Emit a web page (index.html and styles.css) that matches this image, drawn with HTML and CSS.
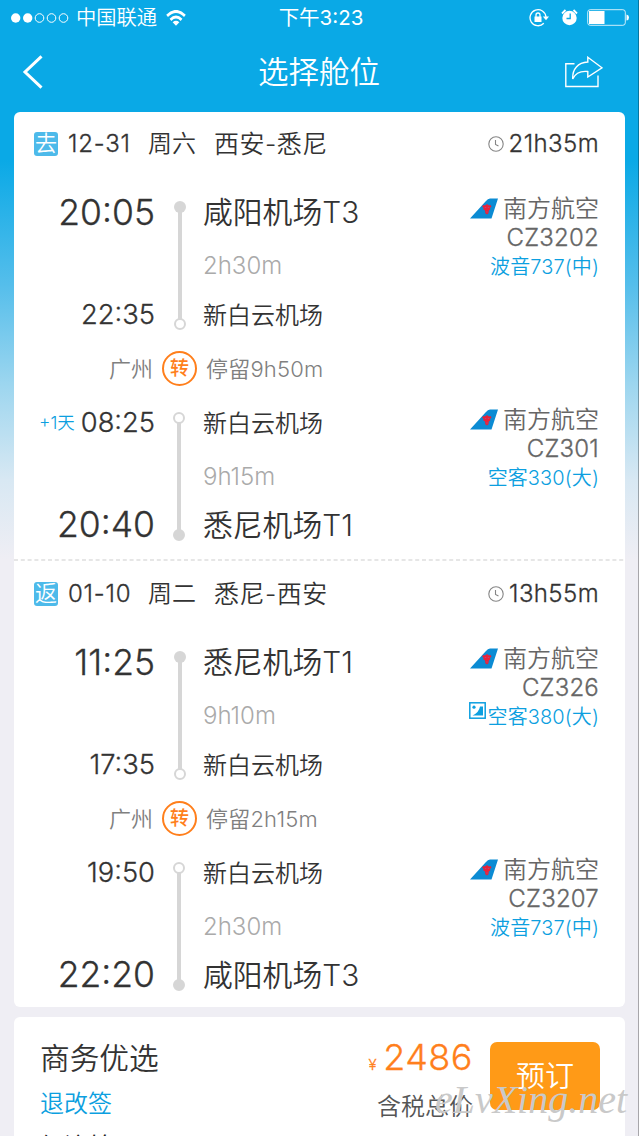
FILE: index.html
```html
<!DOCTYPE html>
<html lang="zh-CN">
<head>
<meta charset="utf-8">
<title>选择舱位</title>
<link rel="stylesheet" href="styles.css">
</head>
<body>
<svg width="0" height="0" class="defs">
  <symbol id="tail" viewBox="0 0 28 21">
    <path d="M0 20.500 15.500 3.500Q18 .7 20 .5H28L21.500 20.500Z" fill="#0b8bd3"/>
    <path d="M12 8.300 13.500 7 15 7.500 17 6 19 7.500 20.500 7 21.500 8.500 20 10 20.300 11.500 18.800 12.500 18.500 15.300 17 16.500 15.300 15.300 15 12.500 13.300 11.500 13.600 10Z" fill="#ea2138"/>
    <path d="M14.800 9.500h1.500M17.800 9.500H19.300M16.200 14h1.500" stroke="#a8508c" stroke-width=".8"/>
  </symbol>
  <symbol id="clock" viewBox="0 0 16 16">
    <g fill="none" stroke="#858585" stroke-width="1.100"><circle cx="8" cy="8" r="7.200"/><path d="M7.500 4v4.500L10.500 10"/></g>
  </symbol>
</svg>
<div class="screen">
  <div class="status">
    <div class="carrier">
      <svg width="58" height="12" viewBox="0 0 58 12"><g fill="#fff"><circle cx="4.700" cy="6" r="4.700"/><circle cx="16.700" cy="6" r="4.700"/></g><g fill="none" stroke="#fff"><circle cx="28.500" cy="6" r="4.300"/><circle cx="40.500" cy="6" r="4.300"/><circle cx="52.500" cy="6" r="4.300"/></g></svg>
      <span class="carrier-name">中国联通</span>
      <svg class="wifi" width="20" height="16" viewBox="0 0 22 16" preserveAspectRatio="none"><g fill="none" stroke="#fff" stroke-width="2.900"><path d="M1.200 5.800Q11-3 20.800 5.800"/><path d="M4.900 9.800Q11 4.300 17.100 9.800"/></g><path d="M7.300 12.200Q11 9.300 14.700 12.200L11 15.800Z" fill="#fff"/></svg>
    </div>
    <div class="clock-time">下午3:23</div>
    <div class="indicators">
      <svg width="20" height="18" viewBox="0 0 20 18"><path d="M14.800 14.300A8 8 0 1 1 17 8" fill="none" stroke="#fff" stroke-width="1.300"/><path d="M13.800 7.500H20L17 11.300Z" fill="#fff"/><rect x="5.500" y="7.500" width="7" height="5.500" fill="#fff"/><path d="M7 8V6a2 2 0 0 1 4 0v2" fill="none" stroke="#fff" stroke-width="1.300"/></svg>
      <svg class="alarm" width="17" height="17" viewBox="0 0 17 17"><circle cx="8.500" cy="9" r="7.200" fill="#fff"/><path d="M1 4.500 4.500 1M16 4.500 12.500 1" stroke="#fff" stroke-width="1.800"/><path d="M9.200 4.500V9.500H5.500" fill="none" stroke="#0aa9e6" stroke-width="1.300"/></svg>
      <svg class="battery" width="42" height="17" viewBox="0 0 42 17"><rect x=".7" y=".7" width="37.600" height="15.600" rx="2.500" fill="none" stroke="#fff" stroke-opacity=".8"/><rect x="2" y="2" width="15.500" height="13" fill="#fff"/><path d="M39.500 5.500Q42 6 42 8.500T39.500 11.500Z" fill="#fff"/></svg>
    </div>
  </div>
  <div class="nav">
    <svg width="22" height="34" viewBox="0 0 22 34"><path d="M19.500 1.300 3 17 19.500 32.700" fill="none" stroke="#fff" stroke-width="3"/></svg>
    <h1>选择舱位</h1>
    <svg class="share" width="38" height="32" viewBox="0 0 38 32"><g fill="none" stroke="#fff" stroke-width="1.400"><path d="M9.500 7.700H.8V30.500H33V19.500"/><path d="M22.800 1.200 37 11.800 22.800 21V15.500C14 14.500 10 18 7.700 23 7.200 13 13 6.500 22.800 6Z"/></g></svg>
  </div>

  <section class="card">
    <article class="journey">
      <header class="head"><span class="tag">去</span><span class="date">12-31</span><span class="week">周六</span><span class="route">西安-悉尼</span><span class="total"><svg width="16" height="16"><use href="#clock"/></svg>21h35m</span></header>
      <div class="leg">
        <div class="time big">20:05</div><div class="place big">咸阳机场T3</div>
        <div class="duration">2h30m</div>
        <div class="time stop">22:35</div><div class="place stop">新白云机场</div>
        <div class="rail"></div>
        <div class="flight"><div class="airline"><svg width="28" height="21"><use href="#tail"/></svg>南方航空</div><div class="no">CZ3202</div><div class="plane">波音737(中)</div></div>
      </div>
      <div class="transfer"><span class="city">广州</span><span class="turn">转</span><span class="stay">停留9h50m</span></div>
      <div class="leg arriving">
        <div class="time stop"><small>+1天</small>08:25</div><div class="place stop">新白云机场</div>
        <div class="duration">9h15m</div>
        <div class="time big">20:40</div><div class="place big">悉尼机场T1</div>
        <div class="rail"></div>
        <div class="flight"><div class="airline"><svg width="28" height="21"><use href="#tail"/></svg>南方航空</div><div class="no">CZ301</div><div class="plane">空客330(大)</div></div>
      </div>
    </article>
    <svg class="divider" width="611" height="2"><path d="M0 1H611" stroke="#dedede" stroke-width="1.500" stroke-dasharray="4 2.800"/></svg>
    <article class="journey return">
      <header class="head"><span class="tag">返</span><span class="date">01-10</span><span class="week">周二</span><span class="route">悉尼-西安</span><span class="total"><svg width="16" height="16"><use href="#clock"/></svg>13h55m</span></header>
      <div class="leg">
        <div class="time big">11:25</div><div class="place big">悉尼机场T1</div>
        <div class="duration">9h10m</div>
        <div class="time stop">17:35</div><div class="place stop">新白云机场</div>
        <div class="rail"></div>
        <div class="flight"><div class="airline"><svg width="28" height="21"><use href="#tail"/></svg>南方航空</div><div class="no">CZ326</div><div class="plane"><svg class="photo" width="17" height="17" viewBox="0 0 17 17"><rect x=".8" y=".8" width="15.400" height="15.400" fill="none" stroke="#0c9fe0" stroke-width="1.500"/><path d="M3.500 13.500Q10 10.500 11 4.500H14V13.500Z" fill="#0c9fe0"/><circle cx="5" cy="5.200" r="1.600" fill="#0c9fe0"/></svg>空客380(大)</div></div>
      </div>
      <div class="transfer"><span class="city">广州</span><span class="turn">转</span><span class="stay">停留2h15m</span></div>
      <div class="leg arriving">
        <div class="time stop">19:50</div><div class="place stop">新白云机场</div>
        <div class="duration">2h30m</div>
        <div class="time big">22:20</div><div class="place big">咸阳机场T3</div>
        <div class="rail"></div>
        <div class="flight"><div class="airline"><svg width="28" height="21"><use href="#tail"/></svg>南方航空</div><div class="no">CZ3207</div><div class="plane">波音737(中)</div></div>
      </div>
    </article>
  </section>

  <section class="card fare">
    <div class="cabin"><h2>商务优选</h2><a>退改签</a><p>经济舱</p></div>
    <div class="price"><div class="amount"><i>¥</i>2486</div><div class="tax">含税总价</div></div>
    <div class="book">预订</div>
  </section>
  <svg class="watermark" width="200" height="56"><text x="2" y="36" textLength="192" lengthAdjust="spacingAndGlyphs">eLvXing.net</text></svg>
</div>
</body>
</html>
```

FILE: styles.css
```css
*, *::before, *::after { box-sizing: border-box; margin: 0; padding: 0; }
body { font-family: Inter, "Noto Sans CJK SC", sans-serif; font-weight: 350; color: #333; }
.defs { position: absolute; }
svg { flex: none; display: block; }
.screen { position: relative; width: 639px; height: 1136px; overflow: hidden; border-right: 1px solid rgba(0,0,0,.3); background: linear-gradient(#0aa9e6 0, #0aa9e6 160px, #55beeb 285px, #9dd6ef 385px, #d8e8f3 480px, #efeef4 560px); }

.status { display: grid; grid-template-columns: 1fr auto 1fr; align-items: center; height: 35px; padding: 0 9px 0 11px; color: #fff; line-height: 35px; }
.carrier, .indicators { display: flex; align-items: center; }
.carrier-name { margin: 0 9px 0 7px; font-size: 20.3px; }
.clock-time { padding-left: 2px; font-size: 20.500px; font-weight: 400; }
.indicators { justify-content: flex-end; }
.alarm { margin: 0 9px 0 12px; }
.nav { display: grid; grid-template-columns: 1fr auto 1fr; align-items: center; height: 77px; padding: 0 35px 3px 22px; color: #fff; }
.nav h1 { font-size: 30.500px; font-weight: 350; line-height: 40px; padding-left: 13px; }
.share { justify-self: end; }

.card { width: 611px; margin: 0 0 10px 14px; background: #fff; border-radius: 6px; overflow: hidden; }
.journey { height: 446px; }
.journey.return { height: 445px; }
.divider { margin: 1px 0; }
.head { display: flex; align-items: center; height: 64px; padding: 0 26px 0 20px; margin-bottom: 14px; font-size: 24.500px; line-height: 64px; }
.tag { width: 24px; height: 24px; margin-top: -1px; border-radius: 3px; background: #4dbaea; color: #fff; font-size: 22px; line-height: 22px; text-align: center; }
.date { width: 80px; padding-left: 10px; font-size: 24px; letter-spacing: .8px; }
.week { width: 66px; padding-left: 10px; font-size: 24px; }
.route { padding-left: 10px; font-size: 25px; letter-spacing: .5px; }
.total { display: flex; align-items: center; gap: 5px; margin-left: auto; font-size: 24px; letter-spacing: .4px; }
.date, .total, .time, .no { -webkit-text-stroke: .3px currentColor; }

.leg { display: grid; grid-template: 44px 62px 38px / 141px 48px 222px 1fr; height: 146px; padding-right: 26px; }
.leg.arriving { grid-template-rows: 45px 63px 36px; }
.leg > * { display: flex; align-items: center; }
.time { grid-column: 1; justify-content: flex-end; font-size: 27.3px; }
.time.big { font-size: 35.500px; }
.leg .time.stop { padding-bottom: 1px; }
.arriving .time.big { padding-bottom: 3px; }
.time small { margin-right: 6px; padding-bottom: 2px; color: #0c9fe0; font-size: 17.500px; -webkit-text-stroke: 0; }
.place { grid-column: 3; padding-bottom: 4px; font-size: 24px; }
.arriving .place.stop { padding-bottom: 2px; }
.place.big { padding-bottom: 5px; font-size: 29.800px; }
.arriving .place.big { padding-bottom: 6px; }
.duration { grid-column: 3; font-size: 24px; color: #aaa; }
.leg > .rail { grid-column: 2; grid-row: 1 / 4; align-self: start; justify-self: center; flex-direction: column; justify-content: space-between; width: 12px; height: 129px; margin: 11px 0 0 1px; background: linear-gradient(90deg, transparent 4px, #d6d6d6 4px, #d6d6d6 8px, transparent 8px) 0 10px / 12px 109px no-repeat; }
.rail::before, .rail::after { content: ""; flex: none; width: 12px; height: 12px; border-radius: 50%; background: #d6d6d6; }
.rail::after, .arriving .rail::before { background: #fff; border: 2.500px solid #d6d6d6; }
.arriving .rail::after { background: #d6d6d6; }
.arriving > .rail { margin: 12px 1px 0 0; }
.leg > .flight { grid-column: 4; grid-row: 1 / 4; align-self: start; flex-direction: column; align-items: flex-end; margin-top: 4px; line-height: 29px; color: #666; font-size: 24px; }
.arriving > .flight { margin-top: 5px; }
.airline, .plane { display: flex; align-items: center; white-space: nowrap; }
.airline svg { margin-right: 5px; }
.no { letter-spacing: .2px; }
.plane { padding-top: 1px; color: #0c9fe0; font-size: 20px; letter-spacing: .1px; }
.photo { margin: -14px 2px 0 0; }

.transfer { display: flex; align-items: center; height: 64px; color: #808080; font-size: 22px; }
.city, .stay { padding-bottom: 2px; }
.stay { letter-spacing: .2px; }
.city { width: 139px; text-align: right; }
.turn { width: 35px; height: 35px; margin: 0 9px; border: 2px solid #ff7f1c; border-radius: 50%; color: #ff7f1c; font-size: 19px; font-weight: 500; line-height: 32px; text-align: center; }

.fare { display: flex; height: 160px; padding: 0 25px; }
.cabin { flex: 1; padding-left: 1px; }
.cabin h2 { padding-top: 20px; font-size: 29.700px; font-weight: 350; line-height: 42px; }
.cabin a { display: block; color: #0c9fe0; font-size: 24px; line-height: 50px; }
.cabin p { color: #222; font-size: 24px; line-height: 30px; margin-top: 3px; font-weight: 400; }
.price { width: 106px; margin-right: 17px; }
.amount { display: flex; align-items: baseline; justify-content: flex-end; padding-top: 19px; color: #ff7f1c; font-size: 36px; line-height: 42px; letter-spacing: .5px; -webkit-text-stroke: .3px currentColor; }
.amount i { margin-right: 6px; font-size: 15px; font-style: normal; }
.tax { color: #555; font-size: 24px; line-height: 41px; text-align: right; white-space: nowrap; }
.book { width: 110px; height: 68px; margin-top: 25px; border-radius: 7px; background: #ff9a17; color: #fff; font-size: 29px; line-height: 69px; text-align: center; }
.watermark { position: absolute; left: 433px; top: 1077px; fill: #c9c9c9; font: italic 40px "Liberation Serif", serif; }
```
